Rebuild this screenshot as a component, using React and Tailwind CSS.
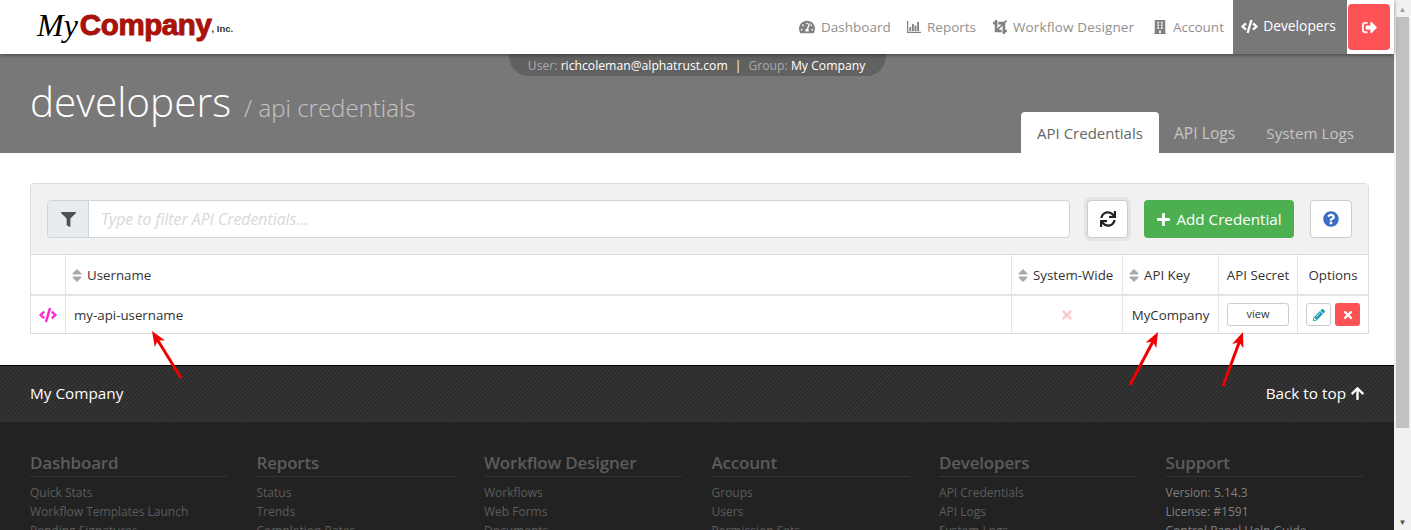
import React from "react";
import {
  FaTachometerAlt,
  FaCrop,
  FaBuilding,
  FaCode,
  FaSignOutAlt,
  FaFilter,
  FaSync,
  FaPlus,
  FaQuestionCircle,
  FaSort,
  FaTimes,
  FaPencilAlt,
  FaArrowUp,
} from "react-icons/fa";

const BarsIcon = ({ className }) => (
  <svg className={className} width="14" height="12" viewBox="0 0 14 12" fill="currentColor">
    <path d="M0 0h1.2v10.8H14V12H0z" />
    <path d="M2.4 6h1.8v4H2.4zM5 3h1.8v7H5zM7.6 4.5h1.8V10H7.6zM10.2 1h1.8v9h-1.8z" />
  </svg>
);

const nav = [
  { label: "Dashboard", icon: FaTachometerAlt, iconClass: "text-[16px]", textClass: "w-[68px]", gapClass: "mr-[18px]" },
  { label: "Reports", icon: BarsIcon, iconClass: "", textClass: "w-[48px]", gapClass: "mr-[18px]" },
  { label: "Workflow Designer", icon: FaCrop, iconClass: "text-[14px]", textClass: "w-[121px] tracking-[0.12px]", gapClass: "mr-[19px]" },
  { label: "Account", icon: FaBuilding, iconClass: "text-[14px]", textClass: "w-[52px]", gapClass: "mr-[8px]" },
];

const footer = [
  { title: "Dashboard", links: ["Quick Stats", "Workflow Templates Launch", "Pending Signatures"] },
  { title: "Reports", links: ["Status", "Trends", "Completion Rates"] },
  { title: "Workflow Designer", links: ["Workflows", "Web Forms", "Documents"] },
  { title: "Account", links: ["Groups", "Users", "Permission Sets"] },
  { title: "Developers", links: ["API Credentials", "API Logs", "System Logs"] },
  { title: "Support", links: ["Version: 5.14.3", "License: #1591", "Control Panel Help Guide"] },
];

const Arrow = ({ x1, y1, x2, y2 }) => {
  const a = Math.atan2(y2 - y1, x2 - x1);
  const p = (len, off) =>
    `${x2 - len * Math.cos(a) + off * Math.sin(a)},${y2 - len * Math.sin(a) - off * Math.cos(a)}`;
  return (
    <g>
      <line x1={x1} y1={y1} x2={x2 - 8 * Math.cos(a)} y2={y2 - 8 * Math.sin(a)} stroke="#f00000" strokeWidth="3" />
      <polygon points={`${x2},${y2} ${p(15, 6)} ${p(11, 0)} ${p(15, -6)}`} fill="#f00000" />
    </g>
  );
};

const SortHead = ({ children }) => (
  <div className="flex items-center gap-[5px]">
    <FaSort className="w-[10px] text-[17px] text-[#a9a9a9]" />
    <span>{children}</span>
  </div>
);

export default function App() {
  return (
    <div className="relative flex h-[530px] w-[1411px] overflow-hidden bg-white text-[14px] text-[#333] font-['Open_Sans',sans-serif]">
      <div className="w-[1394px] shrink-0">
        <header className="relative z-10 flex h-[54px] items-stretch bg-white shadow-[0_1px_4px_rgba(0,0,0,0.45)]">
          <div className="ml-[37px] flex items-center pb-[4px]">
            <span className="mr-[2px] font-['Liberation_Serif',serif] text-[32px] italic leading-none text-black">My</span>
            <span className="font-['Liberation_Sans',sans-serif] text-[29.5px] font-bold leading-none tracking-[-0.4px] text-[#a81208] [-webkit-text-stroke:1px_#a81208]">
              Company
            </span>
            <span className="mt-[9px] font-['Liberation_Sans',sans-serif] text-[9.5px] font-bold text-[#333]">, Inc.</span>
          </div>
          <nav className="ml-auto flex items-stretch text-[13.5px]">
            {nav.map((item) => (
              <div key={item.label} className={`${item.gapClass} flex items-center gap-[6px] text-[#8f8f8f]`}>
                <item.icon className={`${item.iconClass} text-[#808080]`} />
                <span className={`${item.textClass} whitespace-nowrap`}>{item.label}</span>
              </div>
            ))}
            <div className="flex w-[114px] items-center justify-center gap-[5px] bg-[#787878] pb-[2px] pr-[3px] text-[13.8px] text-white">
              <FaCode className="text-[17px]" />
              <span>Developers</span>
            </div>
            <div className="flex items-start px-[1px] pr-[4px] pt-[4px]">
              <div className="flex h-[46px] w-[42px] items-center justify-center rounded-[4px] bg-[#fd5256] text-white">
                <FaSignOutAlt className="text-[15px]" />
              </div>
            </div>
          </nav>
        </header>

        <section className="relative flex h-[99px] items-start justify-between bg-[#787878] pl-[30px] pr-[25px]">
          <div className="absolute left-[509px] top-0 flex h-[22px] w-[377px] items-center justify-center gap-[7px] rounded-b-[20px] bg-[#616161] pr-[2px] pt-[2px] text-[12.2px] text-[#aaa]">
            <span>
              User: <span className="text-white">richcoleman@alphatrust.com</span>
            </span>
            <span className="text-white">|</span>
            <span>
              Group: <span className="text-white">My Company</span>
            </span>
          </div>
          <div className="mt-[20px] flex items-baseline gap-[13px] font-light">
            <h1 className="text-[40.5px] leading-[56px] font-light text-white">developers</h1>
            <span className="text-[24px] text-[#c4c4c4]">/ api credentials</span>
          </div>
          <div className="mt-[58px] flex h-[41px] items-stretch text-[15.2px]">
            <div className="flex items-center rounded-t-[4px] bg-white px-[16px] pt-[1px] text-[15px] text-[#666]">API Credentials</div>
            <div className="flex items-center pl-[15px] pr-[16px] pt-[2px] text-[15.7px] text-[#c6c6c6]">API Logs</div>
            <div className="flex items-center px-[15px] pt-[2px] text-[#c6c6c6]">System Logs</div>
          </div>
        </section>

        <main className="px-[30px] pt-[30px]">
          <div className="w-[1339px] overflow-hidden rounded-t-[4px] border border-[#dcdcdc]">
            <div className="flex h-[70px] items-center bg-[#f1f1f1] px-[16px]">
              <div className="flex h-[38px] w-[1023px] overflow-hidden rounded-[4px] border border-[#ced4da] bg-white">
                <div className="flex w-[41px] items-center justify-center border-r border-[#ced4da] bg-[#e9ecef]">
                  <FaFilter className="text-[15px] text-[#495057]" />
                </div>
                <div className="flex items-center pl-[12px] pt-[1px] text-[15.8px] italic text-[#d8d8d8]">Type to filter API Credentials...</div>
              </div>
              <div className="ml-[17px] flex h-[38px] w-[41px] items-center justify-center rounded-[4px] border border-[#ccc] bg-white shadow-[0_0_0_3px_#e4e4e4]">
                <FaSync className="text-[16px] text-[#222]" />
              </div>
              <div className="ml-[16px] flex h-[38px] w-[150px] items-center justify-center gap-[5px] rounded-[4px] bg-[#4caf50] text-[15.2px] text-white">
                <FaPlus className="text-[15px]" />
                <span>Add Credential</span>
              </div>
              <div className="ml-[16px] flex h-[38px] w-[42px] items-center justify-center rounded-[4px] border border-[#ccc] bg-white">
                <FaQuestionCircle className="text-[16px] text-[#3a6fc4]" />
              </div>
            </div>

            <div className="grid grid-cols-[35px_946px_111px_96px_79px_1fr] border-t border-[#dcdcdc] text-[13.3px]">
              <div className="h-[41px] border-b-2 border-r border-[#e4e4e4]"></div>
              <div className="flex h-[41px] items-center border-b-2 border-r border-[#e4e4e4] pl-[6px] pt-[2px]">
                <SortHead>Username</SortHead>
              </div>
              <div className="flex h-[41px] items-center border-b-2 border-r border-[#e4e4e4] pl-[6px] pt-[2px]">
                <SortHead>System-Wide</SortHead>
              </div>
              <div className="flex h-[41px] items-center border-b-2 border-r border-[#e4e4e4] pl-[6px] pt-[2px]">
                <SortHead>API Key</SortHead>
              </div>
              <div className="flex h-[41px] items-center justify-center border-b-2 border-r border-[#e4e4e4] pt-[2px]">API Secret</div>
              <div className="flex h-[41px] items-center justify-center border-b-2 border-[#e4e4e4] pt-[2px]">Options</div>

              <div className="flex h-[37px] items-center justify-center border-r border-[#e4e4e4]">
                <FaCode className="text-[18px] text-[#fb2cd2]" />
              </div>
              <div className="flex h-[37px] items-center border-r border-[#e4e4e4] pl-[8px] pt-[2px]">my-api-username</div>
              <div className="flex h-[37px] items-center justify-center border-r border-[#e4e4e4]">
                <FaTimes className="text-[14px] text-[#fcc9ca]" />
              </div>
              <div className="flex h-[37px] items-center justify-center border-r border-[#e4e4e4] pt-[2px]">MyCompany</div>
              <div className="flex h-[37px] items-center justify-center border-r border-[#e4e4e4]">
                <div className="flex h-[23px] w-[62px] items-center justify-center rounded-[3px] border border-[#ccc] bg-white text-[11px]">view</div>
              </div>
              <div className="flex h-[37px] items-center justify-center gap-[4px]">
                <div className="flex h-[23px] w-[25px] items-center justify-center rounded-[3px] border border-[#ccc] bg-white">
                  <FaPencilAlt className="text-[12px] text-[#1d9ab8]" />
                </div>
                <div className="flex h-[23px] w-[25px] items-center justify-center rounded-[3px] bg-[#fd5256]">
                  <FaTimes className="text-[12px] text-white" />
                </div>
              </div>
            </div>
          </div>
        </main>

        <footer className="mt-[31px] h-[165px] border-t border-black bg-[#222]">
          <div className="flex h-[56px] items-center justify-between border-b border-[#333] bg-[repeating-linear-gradient(135deg,#2b2b2b_0px,#2b2b2b_1px,#3a3a3a_2px,#2b2b2b_3px)] pl-[30px] pr-[29px] text-[15.3px] text-white">
            <span>My Company</span>
            <span className="flex items-center gap-[4px]">
              Back to top <FaArrowUp className="text-[15px]" />
            </span>
          </div>
          <div className="grid grid-cols-[197px_198px_198px_198px_197px_198px] gap-x-[29.5px] pl-[30px] pt-[28px]">
            {footer.map((col) => (
              <div key={col.title}>
                <h4 className="border-b border-[#333] pb-[1px] text-[17px] font-semibold leading-[25px] tracking-[-0.2px] text-[#5c5c5c]">{col.title}</h4>
                <ul className="mt-[6px] text-[12px] leading-[19px] text-[#5c5c5c]">
                  {col.links.map((link) => (
                    <li key={link} className={col.title === "Support" ? "text-[#808080]" : ""}>{link}</li>
                  ))}
                </ul>
              </div>
            ))}
          </div>
        </footer>
      </div>

      <div className="flex w-[17px] shrink-0 flex-col items-center bg-[#f1f1f1]">
        <div className="flex h-[17px] items-center justify-center text-[8px] text-[#a3a3a3]">▲</div>
        <div className="h-[411px] w-[13px] bg-[#c1c1c1]"></div>
        <div className="mt-auto flex h-[17px] items-center justify-center text-[8px] text-[#505050]">▼</div>
      </div>

      <svg className="pointer-events-none absolute left-0 top-0 z-20" width="1411" height="530">
        <Arrow x1={181} y1={378} x2={152} y2={331} />
        <Arrow x1={1130} y1={385} x2={1158} y2={332} />
        <Arrow x1={1223} y1={386} x2={1243} y2={332} />
      </svg>
    </div>
  );
}
